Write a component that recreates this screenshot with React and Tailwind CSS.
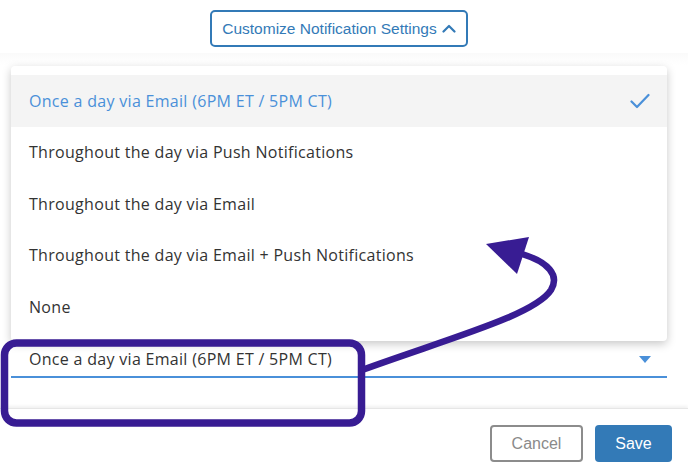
import React from "react";

const options = [
  "Once a day via Email (6PM ET / 5PM CT)",
  "Throughout the day via Push Notifications",
  "Throughout the day via Email",
  "Throughout the day via Email + Push Notifications",
  "None",
];

const App = () => {
  const selected = 0;

  return (
    <div className="relative w-[688px] h-[470px] overflow-hidden bg-white font-['Open_Sans',sans-serif]">
      {/* header */}
      <div className="flex justify-center pt-[10px] pr-[10px] h-[53px]">
        <button
          type="button"
          className="flex items-center gap-[5px] w-[258px] justify-center h-[37px] border-2 border-[#337ab7] rounded-[5px] text-[#337ab7] text-[15.5px] font-['Liberation_Sans',Arial,sans-serif]"
        >
          Customize Notification Settings
          <svg width="14" height="9" viewBox="0 0 14 9" fill="none">
            <path d="M1.5 7.5 L7 2 L12.5 7.5" stroke="#337ab7" strokeWidth="2.2" strokeLinecap="round" strokeLinejoin="round" />
          </svg>
        </button>
      </div>

      {/* body with select */}
      <div className="h-[355px] pl-[11px] pr-[21px] pt-[289px] bg-gradient-to-b from-[#fafafa] to-white to-[12px]">
        <div className="flex items-center justify-between h-[36px] pl-[18px] pr-[16px] border-b-2 border-[#4a90d9] text-[16px] tracking-[0.3px] text-[#333]">
          <span>{options[selected]}</span>
          <svg width="12" height="7" viewBox="0 0 12 7">
            <path d="M0 0 H12 L6 7 Z" fill="#4a90d9" />
          </svg>
        </div>
      </div>

      {/* footer */}
      <div className="flex justify-end gap-[12px] pt-[16px] pr-[16px] border-t border-[#e6e6e6] shadow-[0_-2px_3px_rgba(0,0,0,0.06)] font-['Liberation_Sans',Arial,sans-serif]">
        <button
          type="button"
          className="w-[93px] h-[37px] rounded-[4px] border-2 border-[#8c8c8c] text-[#8a8a8a] text-[16px]"
        >
          Cancel
        </button>
        <button
          type="button"
          className="w-[77px] h-[37px] rounded-[4px] bg-[#337ab7] text-white text-[16px]"
        >
          Save
        </button>
      </div>

      {/* dropdown menu */}
      <div className="absolute left-[11px] top-[66px] w-[656px] h-[275px] bg-white rounded-[4px] py-[9px] shadow-[0_3px_10px_rgba(0,0,0,0.22)]">
        {options.map((opt, i) => (
          <div
            key={opt}
            className={
              i === selected
                ? "flex items-center justify-between h-[51.5px] pl-[18px] pr-[17px] bg-[#f4f4f4] text-[#4a90d9] text-[16px] tracking-[0.3px]"
                : "flex items-center justify-between h-[51.5px] pl-[18px] pr-[17px] text-[#333] text-[16px] tracking-[0.3px]"
            }
          >
            <span>{opt}</span>
            {i === selected && (
              <svg width="20" height="16" viewBox="0 0 20 16" fill="none">
                <path d="M1.5 8.5 L7 14 L18.5 2" stroke="#4a90d9" strokeWidth="2.2" strokeLinecap="round" strokeLinejoin="round" />
              </svg>
            )}
          </div>
        ))}
      </div>

      {/* annotation */}
      <svg
        className="absolute left-0 top-0 pointer-events-none"
        width="688"
        height="470"
        viewBox="0 0 688 470"
        fill="none"
      >
        <rect x="4.5" y="343" width="357" height="80" rx="12" stroke="#381c93" strokeWidth="7.5" />
        <path
          d="M362 370 C450 338 535 315 551 290 C560 275 548 262 522 254"
          stroke="#381c93"
          strokeWidth="6.5"
          strokeLinecap="round"
        />
        <path d="M486 244 L529 237 L517 274 Z" fill="#381c93" />
      </svg>
    </div>
  );
};

export default App;
